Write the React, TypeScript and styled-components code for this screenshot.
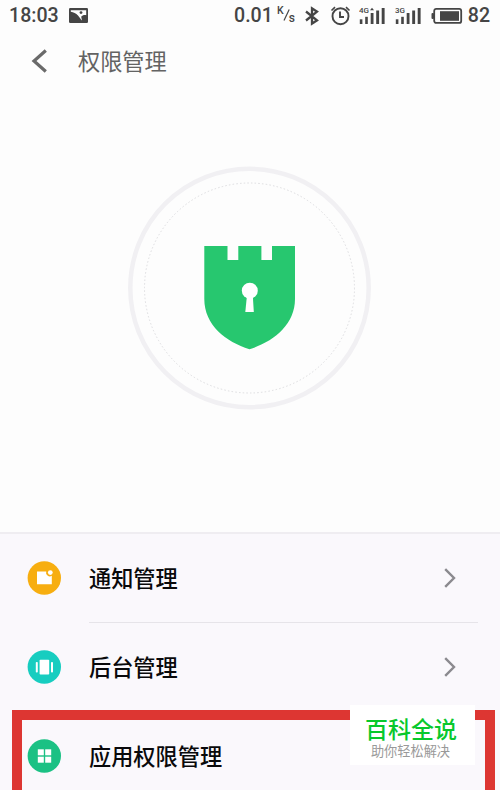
import * as React from 'react';
import { ReactElement } from 'react';
import styled, { createGlobalStyle } from 'styled-components';

const colors = {
  page: '#fdfdfd',
  list: '#faf8fc',
  line: '#e6e4e9',
  status: '#454545',
  title: '#636363',
  text: '#09090b',
  arrow: '#8b8a8f',
  shield: '#27c76f',
  frame: '#dd3632',
  brand: '#08c82c',
};

//styling
const GlobalStyle = createGlobalStyle`
  body {
    margin: 0;
    background: ${colors.page};
    font-family: Roboto, 'Noto Sans CJK SC', sans-serif;
  }
`;

const Screen = styled.div`
  position: relative;
  width: 500px;
  height: 790px;
  overflow: hidden;
  display: flex;
  flex-direction: column;
`;

const StatusBar = styled.div`
  display: flex;
  flex: none;
  align-items: center;
  justify-content: space-between;
  height: 31px;
  padding: 0 9px 0 9px;
  color: ${colors.status};
`;

const StatusGroup = styled.div`
  display: flex;
  align-items: center;
  height: 31px;
`;

const StatusText = styled.span<{ $width: number }>`
  width: ${(props) => props.$width}px;
  font-size: 19.6px;
  font-weight: 500;
  line-height: 31px;
  white-space: nowrap;
`;

const StatusIcon = styled.svg<{ $gap: number }>`
  display: block;
  flex: none;
  margin-left: ${(props) => props.$gap}px;
`;

const Speed = styled.span`
  display: flex;
  width: 19px;
  height: 31px;
  margin-left: 5px;
  font-size: 10.5px;
  font-weight: 500;
  line-height: 12px;
`;

const SpeedTop = styled.span`
  padding-top: 5px;
`;

const SpeedBottom = styled.span`
  padding-top: 12px;
  font-size: 12px;
`;

const SpeedSlash = styled.svg`
  flex: none;
  margin: 8px -1px 0 -1px;
`;

const TitleBar = styled.header`
  display: flex;
  flex: none;
  align-items: center;
  height: 60px;
  padding-left: 31px;
`;

const Title = styled.h1`
  margin: 0 0 2px 30px;
  color: ${colors.title};
  font-family: 'Noto Sans CJK SC', sans-serif;
  font-size: 22.2px;
  font-weight: 400;
  line-height: 58px;
`;

const Hero = styled.div`
  display: flex;
  flex: none;
  justify-content: center;
  box-sizing: border-box;
  height: 441px;
  padding-top: 75px;
`;

const List = styled.div`
  flex: none;
  background: ${colors.list};
  border-top: 2px solid #efedf1;
`;

const Row = styled.div`
  display: flex;
  align-items: center;
  height: 89px;
  padding: 0 22px 0 27px;
`;

const RowIcon = styled.svg`
  flex: none;
  margin-bottom: 2px;
`;

const RowBody = styled.div<{ $line?: boolean }>`
  display: flex;
  flex: 1;
  align-items: center;
  justify-content: space-between;
  box-sizing: border-box;
  height: 89px;
  margin-left: 28px;
  padding: 0 21px 1px 0;
  border-bottom: 1px solid ${(props) => (props.$line ? colors.line : 'transparent')};
`;

const RowText = styled.span`
  padding-bottom: 2px;
  color: ${colors.text};
  font-family: 'Noto Sans CJK SC', sans-serif;
  font-size: 22.2px;
  font-weight: 500;
  line-height: 32px;
`;

const Frame = styled.div`
  position: absolute;
  left: 12px;
  top: 710px;
  box-sizing: border-box;
  width: 483px;
  height: 100px;
  border: 10px solid ${colors.frame};
`;

const Badge = styled.div`
  position: absolute;
  left: 350px;
  top: 705px;
  box-sizing: border-box;
  width: 125px;
  height: 60px;
  padding-top: 13px;
  background: #fff;
  text-align: center;
`;

const BadgeTitle = styled.div`
  height: 25px;
  padding-right: 3px;
  color: ${colors.brand};
  font-size: 23px;
  font-weight: 500;
  line-height: 26px;
`;

const BadgeText = styled.div`
  padding-right: 4px;
  color: #999;
  font-size: 13.2px;
  line-height: 17px;
`;

const Signal = ({ label, gap }: { label: string; gap: number }): ReactElement => (
  <StatusIcon $gap={gap} width="27" height="20" viewBox="0 0 27 20" fill="currentColor">
    <text x="0" y="7.2" fontFamily="Roboto, sans-serif" fontSize="8" fontWeight="500">
      {label}
    </text>
    {label === '4G' && <path d="M11 4.2 L13 1.8 L15 4.2 Z" />}
    <rect x="0.8" y="13.3" width="2.6" height="4.7" />
    <rect x="6.2" y="10.8" width="2.6" height="7.2" />
    <rect x="11.7" y="7" width="2.8" height="11" />
    <rect x="17.2" y="4.5" width="2.9" height="13.5" />
    <rect x="22.7" y="2" width="2.9" height="16" />
  </StatusIcon>
);

const Shield = (): ReactElement => (
  <svg width="244" height="244" viewBox="0 0 244 244" fill="none">
    <circle cx="121.5" cy="122" r="119.2" stroke="#f1f0f3" strokeWidth="4.5" />
    <circle
      cx="121.5"
      cy="122"
      r="105"
      stroke="#dddde0"
      strokeWidth="1"
      strokeDasharray="1.5 2.2"
    />
    <path
      d="M76.3 80 H99.5 V94 H110.3 V80 H133.4 V94 H144 V80 H167 V133 C167 159 145 176 121.5 183.2 C98 176 76.3 159 76.3 133 Z"
      fill={colors.shield}
    />
    <circle cx="121.8" cy="124.7" r="8" fill="#fff" />
    <path d="M119 129 H124.8 L125.8 146 H117.3 Z" fill="#fff" />
  </svg>
);

const Arrow = (): ReactElement => (
  <svg width="14" height="22" viewBox="0 0 14 22" fill="none">
    <path d="M2.2 2.2 L11 11 L2.2 19.8" stroke={colors.arrow} strokeWidth="2.4" />
  </svg>
);

const Circle = ({
  color,
  children,
}: {
  color: string;
  children: React.ReactNode;
}): ReactElement => (
  <RowIcon width="34" height="34" viewBox="0 0 34 34" fill="#fff">
    <circle cx="17.3" cy="17" r="16.7" fill={color} />
    {children}
  </RowIcon>
);

const App = (): ReactElement => {
  return (
    <Screen>
      <GlobalStyle />
      <StatusBar>
        <StatusGroup>
          <StatusText $width={50}>18:03</StatusText>
          <StatusIcon $gap={10} width="19" height="15" viewBox="0 0 19 15">
            <rect width="19" height="15" rx="1.2" fill="currentColor" />
            <path
              d="M1.8 2.2 H17.2 V7.2 C15 6.8 13.3 7.4 12.2 8.8 L13 12.6 C11.5 11.5 10.8 9.5 9 7.6 C7 5.4 4.5 4.2 1.8 3.8 Z"
              fill="#fff"
            />
            <circle cx="12" cy="4.6" r="1.4" fill="currentColor" />
          </StatusIcon>
        </StatusGroup>
        <StatusGroup>
          <StatusText $width={38}>0.01</StatusText>
          <Speed>
            <SpeedTop>K</SpeedTop>
            <SpeedSlash width="7" height="14" viewBox="0 0 7 14" stroke="currentColor">
              <path d="M6.2 1.5 L1 12.5" strokeWidth="1.2" />
            </SpeedSlash>
            <SpeedBottom>s</SpeedBottom>
          </Speed>
          <StatusIcon
            $gap={9}
            width="14"
            height="20"
            viewBox="0 0 14 20"
            fill="none"
            stroke="currentColor"
            strokeWidth="2.3"
          >
            <path d="M1 5.5 L12 14.3 L7 17.6 V2.4 L12 5.7 L1 14.5" />
          </StatusIcon>
          <StatusIcon
            $gap={11}
            width="21"
            height="20"
            viewBox="0 0 21 20"
            fill="none"
            stroke="currentColor"
            strokeWidth="1.9"
          >
            <circle cx="10.5" cy="10.2" r="8" />
            <path d="M10 5.5 V11 H14" />
            <path d="M1.5 4.5 L5 1.2 M19.5 4.5 L16 1.2" strokeWidth="1.6" />
          </StatusIcon>
          <Signal label="4G" gap={8} />
          <Signal label="3G" gap={9} />
          <StatusIcon $gap={9} width="32" height="18" viewBox="0 0 32 18" fill="currentColor">
            <rect x="0.5" y="6" width="2.5" height="6" rx="1" />
            <rect
              x="3.2"
              y="1.9"
              width="27"
              height="14"
              rx="2"
              fill="none"
              stroke="currentColor"
              strokeWidth="1.8"
            />
            <rect x="9" y="4.2" width="19" height="9.6" />
          </StatusIcon>
          <StatusText $width={28}>&nbsp;82</StatusText>
        </StatusGroup>
      </StatusBar>
      <TitleBar>
        <svg width="17" height="26" viewBox="0 0 17 26" fill="none">
          <path d="M14.8 2.5 L3 13 L14.8 23.5" stroke="#6a6a6a" strokeWidth="3.2" />
        </svg>
        <Title>权限管理</Title>
      </TitleBar>
      <Hero>
        <Shield />
      </Hero>
      <List>
        <Row>
          <Circle color="#f7ae10">
            <path d="M10 10.5 H19.2 A3.8 3.8 0 0 0 24.8 14.8 V23.3 H10 Z" />
            <circle cx="23.3" cy="11.6" r="2.4" />
          </Circle>
          <RowBody $line>
            <RowText>通知管理</RowText>
            <Arrow />
          </RowBody>
        </Row>
        <Row>
          <Circle color="#17cdc0">
            <rect x="12.6" y="9.7" width="9.6" height="14.8" rx="0.8" />
            <rect x="8.8" y="12" width="2" height="10.6" rx="0.8" />
            <rect x="24" y="12" width="2" height="10.6" rx="0.8" />
          </Circle>
          <RowBody>
            <RowText>后台管理</RowText>
            <Arrow />
          </RowBody>
        </Row>
        <Row>
          <Circle color="#1bc184">
            <rect x="10.8" y="10.3" width="6" height="6" />
            <rect x="18.2" y="10.3" width="6" height="6" />
            <rect x="10.8" y="17.7" width="6" height="6" />
            <rect x="18.2" y="17.7" width="6" height="6" />
          </Circle>
          <RowBody>
            <RowText>应用权限管理</RowText>
          </RowBody>
        </Row>
      </List>
      <Frame />
      <Badge>
        <BadgeTitle>百科全说</BadgeTitle>
        <BadgeText>助你轻松解决</BadgeText>
      </Badge>
    </Screen>
  );
};
export default App;
